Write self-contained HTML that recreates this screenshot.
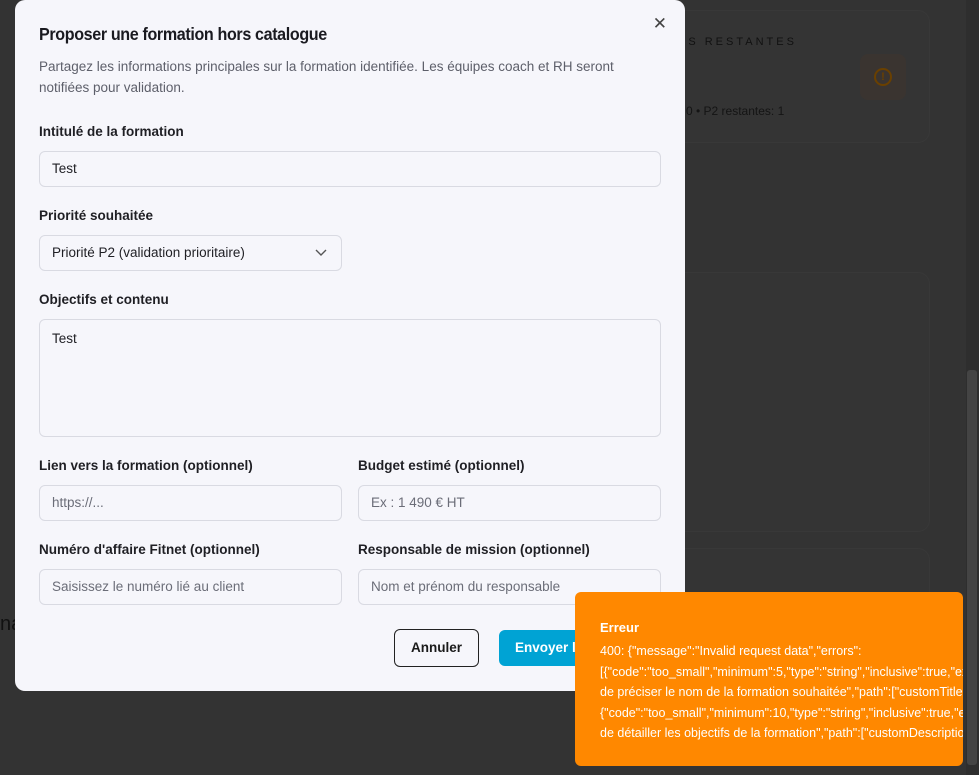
<!DOCTYPE html>
<html><head><meta charset="utf-8"><style>
*{box-sizing:border-box;margin:0;padding:0}
body{width:979px;height:775px;overflow:hidden;background:#333333;font-family:"Liberation Sans",sans-serif;position:relative}
.card{position:absolute;border:1px solid #383838;border-radius:12px;background:#343434}
.modal{position:absolute;left:15px;top:0;width:670px;height:691px;background:#f6f6fb;border-radius:10px;}
.t{position:absolute;color:#1f1f24}
h1{position:absolute;left:24px;top:24px;font-size:17.5px;font-weight:600;color:#1a1a20;letter-spacing:-0.4px;transform:scaleX(0.92);transform-origin:left}
.desc{position:absolute;left:24px;top:56px;width:610px;font-size:13.5px;line-height:21px;color:#5d5f6a}
.lbl{position:absolute;font-size:13.5px;font-weight:600;color:#1f1f24}
.in{position:absolute;height:36px;border:1px solid #d9dae2;border-radius:6px;background:#f6f6fb;font-size:13.5px;color:#1f1f24;padding:0 12px;line-height:34px}
.ph{color:#6b6d78}
.toast{position:absolute;left:575px;top:592px;width:388px;height:174px;background:#ff8800;border-radius:6px;color:#fff;font-size:12.5px;overflow:hidden;padding:28px 0 0 25px;white-space:nowrap}
</style></head><body>
<div class="card" style="left:660px;top:10px;width:270px;height:133px"></div>
<div class="t" style="left:678px;top:36px;font-size:11px;letter-spacing:3px;color:#111">ES RESTANTES</div>
<div style="position:absolute;left:860px;top:54px;width:46px;height:46px;border-radius:8px;background:#3a3430"></div>
<div style="position:absolute;left:874px;top:68px;width:18px;height:18px;border:2px solid #6a4000;border-radius:50%;color:#6a4000;font-size:11px;font-weight:bold;text-align:center;line-height:14px">!</div>
<div class="t" style="left:686px;top:104px;font-size:12px;color:#141414">0 • P2 restantes: 1</div>
<div class="card" style="left:660px;top:272px;width:270px;height:260px"></div>
<div class="card" style="left:660px;top:548px;width:270px;height:100px"></div>
<div class="t" style="left:0;top:613px;font-size:20px;color:#111">na</div>
<div style="position:absolute;left:966px;top:0;width:13px;height:775px;background:#2e2e2e"></div>
<div style="position:absolute;left:967px;top:370px;width:10px;height:395px;background:#444;border-radius:3px"></div>

<div class="modal">
<div style="position:absolute;right:18px;top:14px;font-size:17px;color:#444">✕</div>
<h1>Proposer une formation hors catalogue</h1>
<div class="desc">Partagez les informations principales sur la formation identifiée. Les équipes coach et RH seront notifiées pour validation.</div>
<div class="lbl" style="left:24px;top:124px">Intitulé de la formation</div>
<div class="in" style="left:24px;top:151px;width:622px">Test</div>
<div class="lbl" style="left:24px;top:208px">Priorité souhaitée</div>
<div class="in" style="left:24px;top:235px;width:303px">Priorité P2 (validation prioritaire)<svg style="position:absolute;right:14px;top:13px" width="12" height="8" viewBox="0 0 12 8"><path d="M1 1l5 5 5-5" fill="none" stroke="#555" stroke-width="1.4"/></svg></div>
<div class="lbl" style="left:24px;top:292px">Objectifs et contenu</div>
<div class="in" style="left:24px;top:319px;width:622px;height:118px;line-height:20px;padding-top:9px">Test</div>
<div class="lbl" style="left:24px;top:458px">Lien vers la formation (optionnel)</div>
<div class="lbl" style="left:343px;top:458px">Budget estimé (optionnel)</div>
<div class="in ph" style="left:24px;top:485px;width:303px">https://...</div>
<div class="in ph" style="left:343px;top:485px;width:303px">Ex : 1 490 € HT</div>
<div class="lbl" style="left:24px;top:542px">Numéro d'affaire Fitnet (optionnel)</div>
<div class="lbl" style="left:343px;top:542px">Responsable de mission (optionnel)</div>
<div class="in ph" style="left:24px;top:569px;width:303px">Saisissez le numéro lié au client</div>
<div class="in ph" style="left:343px;top:569px;width:303px">Nom et prénom du responsable</div>
<div style="position:absolute;left:379px;top:629px;width:85px;height:38px;border:1.5px solid #222;border-radius:6px;font-size:13.5px;font-weight:600;text-align:center;line-height:35px;color:#1a1a1a">Annuler</div>
<div style="position:absolute;left:484px;top:630px;width:150px;height:36px;background:#00a3d4;border-radius:6px;font-size:13.5px;font-weight:600;color:#fff;line-height:36px;padding-left:16px">Envoyer la demande</div>
</div>

<div class="toast">
<div style="font-weight:600;font-size:13px;margin-bottom:6px">Erreur</div>
<div style="line-height:20.5px">400: {"message":"Invalid request data","errors":<br>[{"code":"too_small","minimum":5,"type":"string","inclusive":true,"exact":false,"message":"Merci<br>de préciser le nom de la formation souhaitée","path":["customTitle"]},<br>{"code":"too_small","minimum":10,"type":"string","inclusive":true,"exact":false,"message":"Merci<br>de détailler les objectifs de la formation","path":["customDescription"]}]}</div>
</div>
</body></html>
